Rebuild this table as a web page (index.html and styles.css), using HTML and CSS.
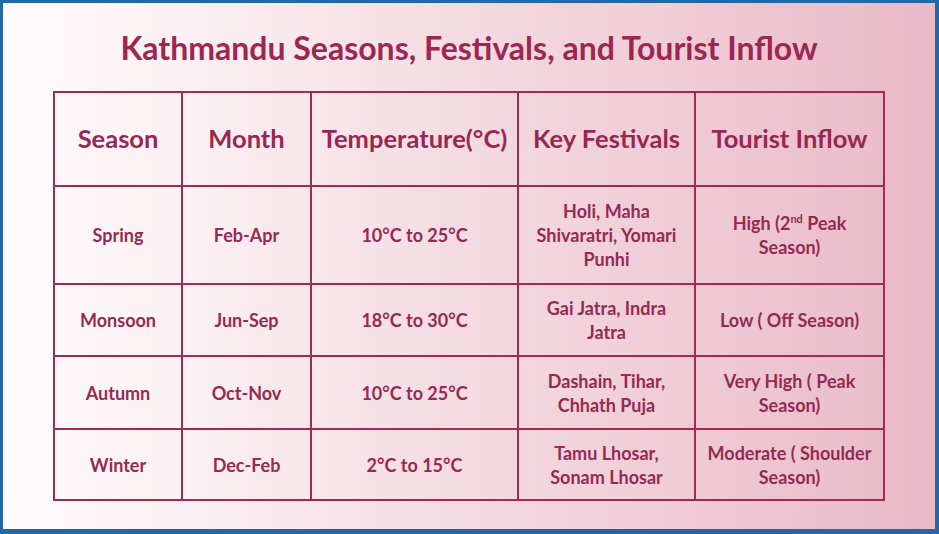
FILE: index.html
```html
<!DOCTYPE html>
<html lang="en">
<head>
<meta charset="utf-8">
<title>Kathmandu Seasons</title>
<link rel="stylesheet" href="styles.css">
</head>
<body>
<div class="frame">
  <h1 class="title">Kathmandu Seasons, Festivals, and Tourist Inflow</h1>
  <table class="seasons">
    <colgroup>
      <col class="c1"><col class="c2"><col class="c3"><col class="c4"><col class="c5">
    </colgroup>
    <thead>
      <tr class="r-head">
        <th>Season</th><th>Month</th><th>Temperature(°C)</th><th>Key Festivals</th><th>Tourist Inflow</th>
      </tr>
    </thead>
    <tbody>
      <tr class="r1">
        <td>Spring</td><td>Feb-Apr</td><td>10°C to 25°C</td>
        <td>Holi, Maha<br>Shivaratri, Yomari<br>Punhi</td>
        <td>High (2<sup>nd</sup> Peak<br>Season)</td>
      </tr>
      <tr class="r2">
        <td>Monsoon</td><td>Jun-Sep</td><td>18°C to 30°C</td>
        <td>Gai Jatra, Indra<br>Jatra</td>
        <td>Low ( Off Season)</td>
      </tr>
      <tr class="r3">
        <td>Autumn</td><td>Oct-Nov</td><td>10°C to 25°C</td>
        <td>Dashain, Tihar,<br>Chhath Puja</td>
        <td>Very High ( Peak<br>Season)</td>
      </tr>
      <tr class="r4">
        <td>Winter</td><td>Dec-Feb</td><td>2°C to 15°C</td>
        <td>Tamu Lhosar,<br>Sonam Lhosar</td>
        <td>Moderate ( Shoulder<br>Season)</td>
      </tr>
    </tbody>
  </table>
</div>
</body>
</html>
```

FILE: styles.css
```css
html, body {
  margin: 0;
  padding: 0;
}
body {
  width: 939px;
  height: 534px;
  overflow: hidden;
  font-family: Lato, "Open Sans", sans-serif;
}
.frame {
  box-sizing: border-box;
  width: 939px;
  height: 534px;
  border-style: solid;
  border-color: #1f6aa6;
  border-width: 3px 4px 5px 3px;
  background: linear-gradient(to right, #fefbfc 0%, #fbf0f3 20%, #f4dae1 50%, #efcad5 75%, #e9b9c8 100%);
  padding-top: 26px;
}
.title {
  margin: 0 0 24px 0;
  text-align: center;
  font-size: 32px;
  line-height: 38px;
  font-weight: 700;
  color: #9b2752;
}
.seasons {
  margin: 0 auto;
  width: 830px;
  table-layout: fixed;
  border-collapse: collapse;
  color: #952a52;
}
.c1 { width: 128px; }
.c2 { width: 129px; }
.c3 { width: 207px; }
.c4 { width: 177px; }
.c5 { width: 189px; }
.seasons th,
.seasons td {
  border: 2px solid #a02b52;
  text-align: center;
  vertical-align: middle;
  padding: 0 2px;
}
.seasons th {
  font-size: 25.5px;
  font-weight: 700;
  color: #982752;
  padding-bottom: 2px;
}
.seasons td {
  font-size: 18px;
  line-height: 24px;
  font-weight: 700;
}
.seasons sup {
  font-size: 11px;
  line-height: 0;
  vertical-align: 7px;
}
.r-head { height: 94px; }
.r1 { height: 98px; }
.r2 { height: 72px; }
.r3 { height: 73px; }
.r4 { height: 71px; }
```
